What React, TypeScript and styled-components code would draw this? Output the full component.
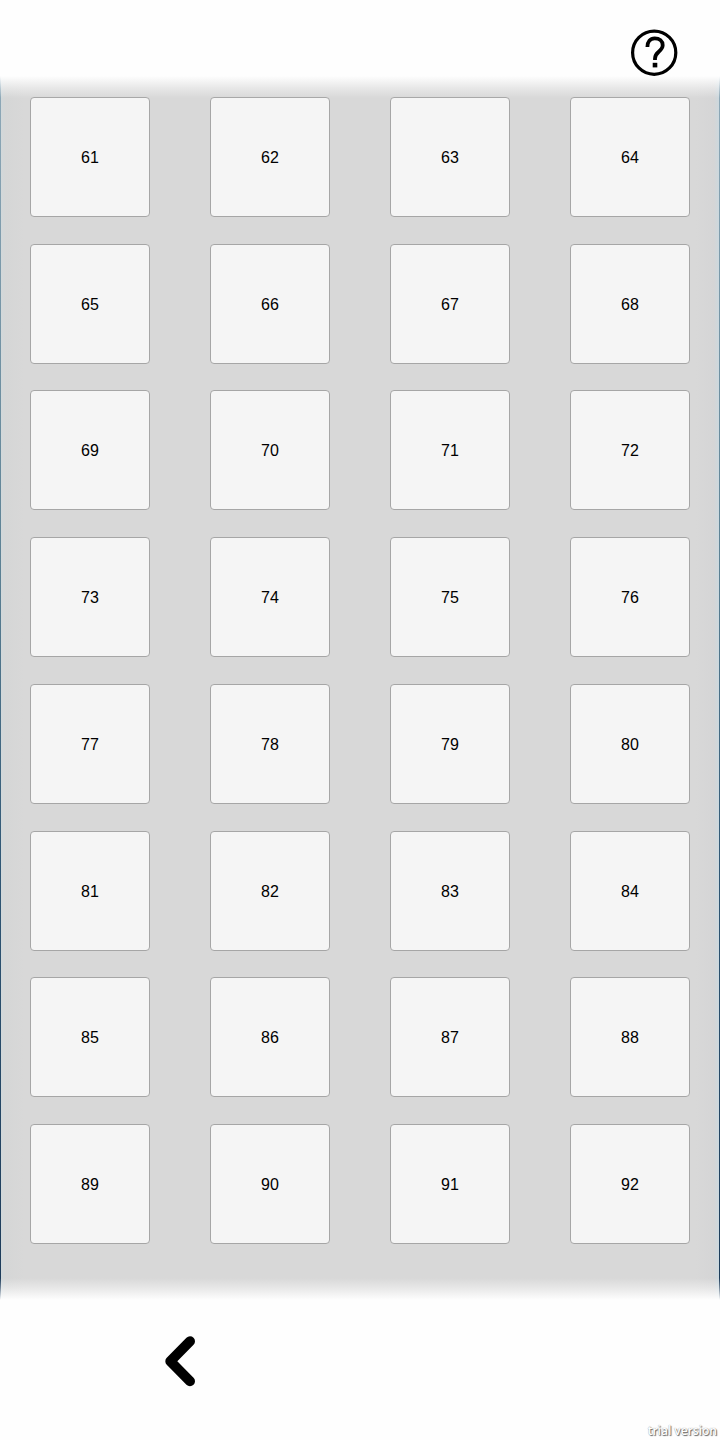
import React from "react";
import styled, { createGlobalStyle } from "styled-components";

const GlobalStyle = createGlobalStyle`
  *, *::before, *::after { box-sizing: border-box; }
  body { margin: 0; background: #fefefe; font-family: "Liberation Sans", Arial, sans-serif; color: #000; }
`;

const Page = styled.div`
  display: flex;
  flex-direction: column;
  min-height: 100vh;
`;

const Header = styled.header`
  display: flex;
  justify-content: flex-end;
  padding: 28px 41px 0 0;
  height: 76px;
`;

const IconButton = styled.button`
  display: flex;
  padding: 0;
  border: 0;
  background: none;
  cursor: pointer;
`;

const Backdrop = styled.main`
  display: flex;
  flex: 1;
  background: linear-gradient(#8fa9b8, #5c8194 40%, #2f5674 65%, #1c3a58);
  position: relative;
`;

const Levels = styled.div`
  flex: 1;
  display: grid;
  grid-template-columns: repeat(4, 1fr);
  justify-items: center;
  align-content: space-between;
  row-gap: 16px;
  padding: 21px 0 56px;
  background: linear-gradient(
    to right,
    transparent 1px,
    #d2d8da 1px,
    #d5d6d6 6px,
    #d8d8d8 24px,
    #d8d8d8 calc(100% - 24px),
    #d5d5d6 calc(100% - 6px),
    #ccd8de calc(100% - 1px),
    transparent calc(100% - 1px)
  );
`;

const Fade = styled.div<{ $edge: "top" | "bottom" }>`
  position: absolute;
  left: 0;
  right: 0;
  ${(p) => p.$edge}: 0;
  height: 22px;
  background: linear-gradient(
    to ${(p) => p.$edge},
    rgba(254, 254, 254, 0),
    rgba(254, 254, 254, 0.4) 45%,
    #fefefe
  );
  pointer-events: none;
`;

const LevelButton = styled.button`
  width: 120px;
  height: 120px;
  padding: 2px 0 0;
  border: 1px solid #a6a6a6;
  border-radius: 4px;
  background: #f5f5f5;
  color: #000;
  font: 16px/20px "Liberation Sans", Arial, sans-serif;
  cursor: pointer;
`;

const Footer = styled.footer`
  display: grid;
  grid-template-columns: 1fr 1fr;
  justify-items: center;
  align-items: start;
  height: 140px;
  padding-top: 35px;
  position: relative;
`;

const Watermark = styled.small`
  position: absolute;
  right: 3px;
  bottom: 1px;
  color: #fff;
  font: 600 12px/16px "Open Sans", "Noto Sans", sans-serif;
  text-shadow: 1px 1px 1px #666, 0 0 1px #888;
`;

const levels = Array.from({ length: 32 }, (_, i) => 61 + i);

export default function App() {
  return (
    <Page>
      <GlobalStyle />
      <Header>
        <IconButton type="button" aria-label="Help">
          <svg width="50" height="50" viewBox="0 0 50 50" fill="none" stroke="#000">
            <circle cx="25.2" cy="24.7" r="21.6" strokeWidth="3.2" />
            <path
              d="M18.4 19C18.4 13.5 21.2 10.4 25.7 10.4C30.4 10.4 33.7 13.2 33.7 17.3C33.7 20.3 31.8 22 29.5 24C26.9 26.3 26 27.6 26 30.5V32"
              strokeWidth="3.8"
            />
            <path d="M26 34.8V39.4" strokeWidth="4.6" />
          </svg>
        </IconButton>
      </Header>
      <Backdrop>
        <Levels>
          {levels.map((n) => (
            <LevelButton type="button" key={n}>{n}</LevelButton>
          ))}
        </Levels>
        <Fade $edge="top" />
        <Fade $edge="bottom" />
      </Backdrop>
      <Footer>
        <IconButton type="button" aria-label="Previous page">
          <svg width="32" height="52" viewBox="0 0 32 52" fill="none" stroke="#000" strokeWidth="10" strokeLinecap="round" strokeLinejoin="round">
            <path d="M26 6.2L6.3 26.2L26 46.2" />
          </svg>
        </IconButton>
        <Watermark>trial version</Watermark>
      </Footer>
    </Page>
  );
}
